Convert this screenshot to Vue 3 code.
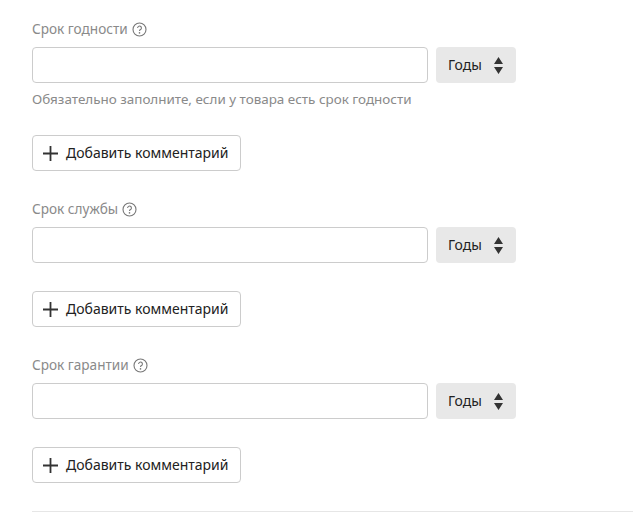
<template>
  <div class="form">
    <div v-for="field in fields" :key="field.label" class="field">
      <div class="label">
        <span>{{ field.label }}</span>
        <svg class="hint-icon" width="15" height="15" viewBox="0 0 15 15">
          <circle cx="7.5" cy="7.5" r="6.5" fill="none" stroke="#777" stroke-width="1.1" />
          <path d="M5.6 6a1.9 1.9 0 1 1 2.9 1.6c-.7.4-1 .8-1 1.5" fill="none" stroke="#777" stroke-width="1.1" />
          <circle cx="7.5" cy="10.9" r=".8" fill="#777" />
        </svg>
      </div>
      <div class="row">
        <input class="input" type="text" />
        <button class="select" type="button">
          <span class="btn-text">Годы</span>
          <svg width="9" height="17" viewBox="0 0 9 17">
            <path d="M4.5 0 L9 7 H0 Z M0 10 H9 L4.5 17 Z" fill="#333" />
          </svg>
        </button>
      </div>
      <div v-if="field.note" class="note">{{ field.note }}</div>
      <button class="add" type="button">
        <svg width="15" height="15" viewBox="0 0 15 15">
          <path d="M7.5 0 V15 M0 7.5 H15" stroke="#333" stroke-width="1.8" fill="none" />
        </svg>
        <span class="btn-text">Добавить комментарий</span>
      </button>
    </div>
    <div class="divider"></div>
  </div>
</template>

<script setup>
const fields = [
  { label: 'Срок годности', note: 'Обязательно заполните, если у товара есть срок годности' },
  { label: 'Срок службы', note: '' },
  { label: 'Срок гарантии', note: '' }
];
</script>

<style>
html, body {
  background: #fff;
  overflow: hidden;
}
</style>

<style scoped>
.form {
  width: 633px;
  height: 513px;
  box-sizing: border-box;
  padding: 20px 0 0 32px;
  font-family: "Noto Sans", "Open Sans", sans-serif;
  overflow: hidden;
}

.field + .field {
  margin-top: 29px;
}

.label {
  display: flex;
  align-items: center;
  gap: 4px;
  height: 18px;
  margin-bottom: 9px;
  font-size: 13.6px;
  line-height: 18px;
  color: #8a8a8a;
}

.row {
  display: flex;
  gap: 8px;
  margin-bottom: 28px;
}

.input {
  box-sizing: border-box;
  width: 396px;
  height: 36px;
  border: 1px solid #ccc;
  border-radius: 4px;
  background: #fff;
  outline: none;
}

.select {
  box-sizing: border-box;
  display: flex;
  align-items: center;
  justify-content: space-between;
  width: 80px;
  height: 36px;
  padding: 0 13px 0 12px;
  border: none;
  border-radius: 4px;
  background: #e8e8e8;
  color: #222;
  font-family: inherit;
  font-size: 14px;
}

.btn-text {
  position: relative;
  top: -1px;
}

.note {
  margin-top: -21px;
  margin-bottom: 27px;
  font-size: 13.45px;
  line-height: 18px;
  color: #8a8a8a;
}

.add {
  box-sizing: border-box;
  display: flex;
  align-items: center;
  gap: 8px;
  width: 209px;
  height: 36px;
  padding: 0 10px;
  border: 1px solid #ccc;
  border-radius: 4px;
  background: #fff;
  color: #222;
  font-family: inherit;
  font-size: 14px;
  white-space: nowrap;
}

.divider {
  height: 1px;
  margin-top: 28px;
  background: #e6e6e6;
}
</style>
